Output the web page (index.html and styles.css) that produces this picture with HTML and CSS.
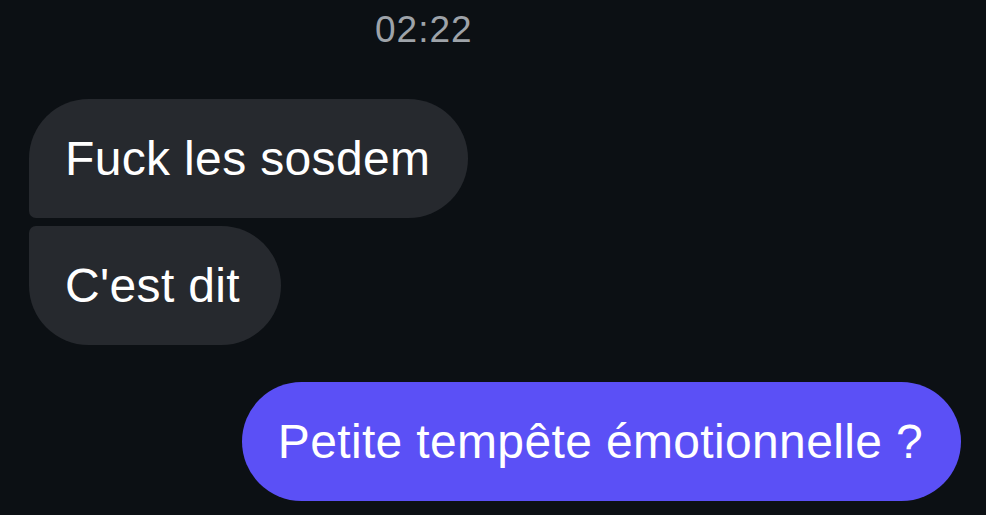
FILE: index.html
```html
<!DOCTYPE html>
<html lang="fr">
<head>
<meta charset="utf-8">
<link rel="stylesheet" href="styles.css">
</head>
<body>
<div class="chat">
  <div class="time">02:22</div>
  <div class="group incoming">
    <div class="bubble in first">Fuck les sosdem</div>
    <div class="bubble in last">C'est dit</div>
  </div>
  <div class="group outgoing">
    <div class="bubble out">Petite tempête émotionnelle ?</div>
  </div>
</div>
</body>
</html>
```

FILE: styles.css
```css
html, body {
  margin: 0;
  padding: 0;
  background: #0c1014;
  height: 100%;
  overflow: hidden;
}

.chat {
  font-family: "Liberation Sans", Arial, sans-serif;
  color: #ffffff;
  padding: 10px 25px 0 29px;
  display: flex;
  flex-direction: column;
}

.time {
  color: #9ea3a9;
  font-size: 37px;
  line-height: 40px;
  letter-spacing: 1px;
  padding-left: 346px;
  margin-bottom: 49px;
}

.group {
  display: flex;
  flex-direction: column;
  gap: 8px;
}

.incoming {
  align-items: flex-start;
}

.outgoing {
  align-items: flex-end;
  margin-top: 37px;
}

.bubble {
  font-size: 48px;
  line-height: 59px;
  letter-spacing: 0.35px;
  padding: 30px 38px 30px 36px;
  border-radius: 60px;
  white-space: nowrap;
}

.in {
  background: #26292e;
}

.in.first {
  border-bottom-left-radius: 7px;
}

.in.last {
  border-top-left-radius: 7px;
  padding-right: 41px;
}

.out {
  background: #5b50f6;
}
```
